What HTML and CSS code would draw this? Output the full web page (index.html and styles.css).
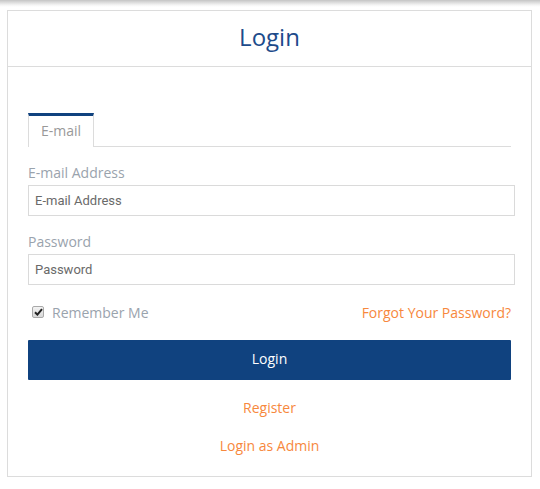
FILE: index.html
```html
<!DOCTYPE html>
<html>
<head>
<meta charset="utf-8">
<link rel="stylesheet" href="styles.css">
</head>
<body>
<div class="topbar"></div>
<div class="card">
  <div class="card-header">Login</div>
  <div class="card-body">
    <div class="tabs">
      <div class="tab active">E-mail</div>
    </div>
    <div class="field">
      <label class="label">E-mail Address</label>
      <input class="input" type="text" placeholder="E-mail Address">
    </div>
    <div class="field">
      <label class="label">Password</label>
      <input class="input" type="password" placeholder="Password">
    </div>
    <div class="row">
      <label class="remember">
        <span class="check"><svg width="9" height="8" viewBox="0 0 9 8"><path d="M1 4.2 L3.4 6.6 L8 1.2" fill="none" stroke="#222" stroke-width="2"/></svg></span>
        Remember Me
      </label>
      <a class="link" href="#">Forgot Your Password?</a>
    </div>
    <button class="btn">Login</button>
    <div class="links">
      <a class="link" href="#">Register</a>
      <a class="link" href="#">Login as Admin</a>
    </div>
  </div>
</div>
</body>
</html>
```
FILE: styles.css
```css
* { box-sizing: border-box; }
html, body { margin: 0; padding: 0; background: #fff; }
body {
  font-family: "Open Sans", "Liberation Sans", sans-serif;
  font-size: 14px;
  color: #555;
}
.topbar {
  height: 10px;
  background: linear-gradient(to bottom, #c4c4c4 0px, #d8d8d8 2px, #f4f4f4 5px, #ffffff 7px);
}
.card {
  margin-left: 7px;
  width: 525px;
  border: 1px solid #dcdcdc;
}
.card-header {
  height: 56px;
  border-bottom: 1px solid #dcdcdc;
  display: flex;
  align-items: center;
  justify-content: center;
  font-size: 24px;
  color: #1d4b8b;
  padding-bottom: 4px;
}
.card-body {
  padding: 46px 20px 20px 20px;
}
.tabs {
  display: flex;
  border-bottom: 1px solid #dcdcdc;
  height: 34px;
}
.tab {
  width: 66px;
  height: 34px;
  border-top: 3px solid #10427f;
  border-left: 1px solid #dcdcdc;
  border-right: 1px solid #dcdcdc;
  background: #fff;
  color: #999;
  font-size: 14px;
  display: flex;
  align-items: center;
  justify-content: center;
  padding-bottom: 2px;
}
.field { display: flex; flex-direction: column; }
.tabs + .field { margin-top: 16px; }
.field + .field { margin-top: 16px; }
.label {
  color: #9aa3ad;
  font-size: 14px;
  line-height: 20px;
  margin-bottom: 2px;
}
.input {
  width: calc(100% + 4px);
  height: 31px;
  border: 1px solid #dadada;
  padding: 0 6px;
  font-family: Roboto, "Liberation Sans", sans-serif;
  font-size: 13px;
  color: #666;
  outline: none;
}
.input::placeholder { color: #6a6a6a; opacity: 1; }
.row {
  display: flex;
  justify-content: space-between;
  align-items: center;
  margin-top: 17px;
  height: 20px;
}
.remember {
  display: flex;
  align-items: center;
  color: #9aa3ad;
  font-size: 14px;
  padding-left: 4px;
}
.check {
  width: 12px;
  height: 12px;
  border: 1px solid #a9a9a9;
  border-radius: 2px;
  background: linear-gradient(#f3f3f3, #d8d8d8);
  display: inline-flex;
  align-items: center;
  justify-content: center;
  margin-right: 8px;
}
.link {
  color: #f7883d;
  text-decoration: none;
  font-size: 14px;
}
.btn {
  display: block;
  width: 100%;
  height: 40px;
  margin-top: 18px;
  padding: 0 0 3px 0;
  background: #10427f;
  color: #fff;
  border: none;
  border-radius: 1px;
  font-family: "Open Sans", "Liberation Sans", sans-serif;
  font-size: 14px;
}
.links {
  display: flex;
  flex-direction: column;
  align-items: center;
  gap: 18px;
  margin-top: 18px;
  line-height: 20px;
}
```
